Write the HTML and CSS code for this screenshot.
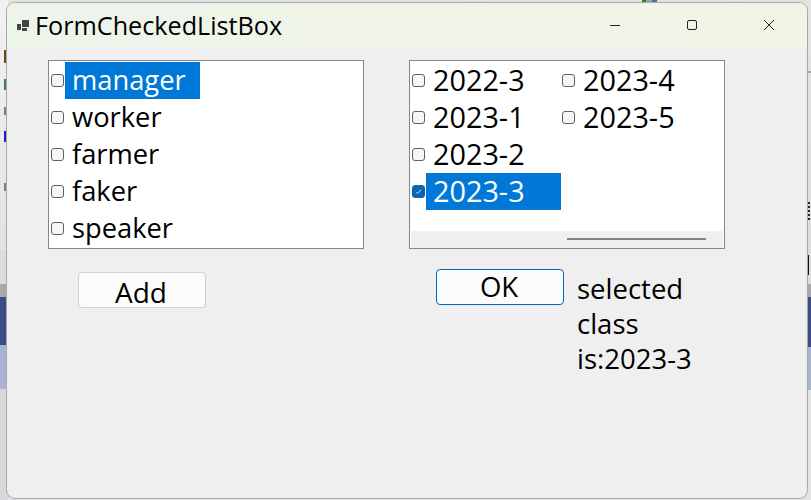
FILE: index.html
```html
<!DOCTYPE html>
<html lang="en">
<head>
<meta charset="utf-8">
<title>FormCheckedListBox</title>
<link rel="stylesheet" href="styles.css">
</head>
<body>
<div class="desktop">
  <div class="strip strip-left">
    <i class="mark mark-a"></i>
    <i class="mark mark-b"></i>
    <i class="mark mark-c"></i>
    <i class="mark mark-d"></i>
    <i class="mark mark-e"></i>
  </div>
  <div class="strip strip-right">
    <i class="mark mark-f"></i>
    <i class="mark mark-g"></i>
    <i class="mark mark-h"></i>
  </div>
  <div class="topbits"><i class="bit bit-g"></i><i class="bit bit-s"></i><i class="bit bit-b"></i></div>
  <div class="window">
    <header class="titlebar">
      <svg class="app-icon" width="13" height="11" viewBox="0 0 13 11"><path fill="#444" d="M0 4h4v6H0zM5 0h7v7H5zM5 8h5v3H5z"/></svg>
      <span class="title">FormCheckedListBox</span>
      <div class="caption">
        <svg class="cap" width="46" height="12" viewBox="0 0 46 12"><path stroke="#222" stroke-width="1" d="M18 6.5h10"/></svg>
        <svg class="cap" width="46" height="12" viewBox="0 0 46 12"><rect x="18.5" y="1.5" width="9" height="9" rx="1.5" fill="none" stroke="#222"/></svg>
        <svg class="cap" width="46" height="12" viewBox="0 0 46 12"><path stroke="#222" fill="none" d="M18 1l10 10M28 1L18 11"/></svg>
      </div>
    </header>
    <main class="content">
      <section class="col col-left">
        <div class="listbox">
          <div class="item"><span class="box"></span><span class="label selected">manager</span></div>
          <div class="item"><span class="box"></span><span class="label">worker</span></div>
          <div class="item"><span class="box"></span><span class="label">farmer</span></div>
          <div class="item"><span class="box"></span><span class="label">faker</span></div>
          <div class="item"><span class="box"></span><span class="label">speaker</span></div>
        </div>
        <button class="btn btn-add">Add</button>
      </section>
      <section class="col col-right">
        <div class="listbox listbox-multi">
          <div class="columns">
            <div class="item"><span class="box"></span><span class="label num">2022-3</span></div>
            <div class="item"><span class="box"></span><span class="label num">2023-4</span></div>
            <div class="item"><span class="box"></span><span class="label num">2023-1</span></div>
            <div class="item"><span class="box"></span><span class="label num">2023-5</span></div>
            <div class="item"><span class="box"></span><span class="label num">2023-2</span></div>
            <div class="item"></div>
            <div class="item"><span class="box checked"><svg width="9" height="9" viewBox="0 0 9 9"><path d="M2 4.8l1.7 1.7L7 2.8" fill="none" stroke="#cfe2f5" stroke-width="1"/></svg></span><span class="label num selected">2023-3</span></div>
          </div>
          <div class="hscroll"><div class="thumb"></div></div>
        </div>
        <div class="action-row">
          <button class="btn btn-ok">OK</button>
          <p class="result">selected class is:2023-3</p>
        </div>
      </section>
    </main>
  </div>
</div>
</body>
</html>
```
FILE: styles.css
```css
* { box-sizing: border-box; }
html, body { margin: 0; height: 100%; }
body { overflow: hidden; font-family: "Open Sans", "Noto Sans", sans-serif; color: #000; }
.desktop { position: relative; width: 811px; height: 500px; background: #e2e2e4; overflow: hidden; }
.strip { position: absolute; top: 0; height: 500px; overflow: hidden; }
.strip-left { left: 0; width: 8px; background: linear-gradient(#f2f2f2 0, #e2e2e2 250px, #dcdcde 250px, #dcdcde 284px, #a9a9ad 284px, #a9a9ad 297px, #3b4d85 297px, #3b4d85 345px, #a9b4d2 345px, #a9b4d2 389px, #d8d8dc 389px); }
.strip-right { right: 0; width: 5px; background: linear-gradient(#e4e4e6 0, #dcdcde 284px, #a9a9ad 284px, #a9a9ad 297px, #3b4d85 297px, #3b4d85 347px, #a9b4d2 347px, #a9b4d2 390px, #e4e4e4 390px); }
.mark { position: absolute; display: block; }
.mark-a { left: 4px; top: 50px; width: 2px; height: 13px; background: #6b4a20; }
.mark-b { left: 4px; top: 79px; width: 2px; height: 11px; background: #3d7a7a; }
.mark-c { left: 4px; top: 107px; width: 3px; height: 8px; background: #7a7a90; }
.mark-d { left: 4px; top: 131px; width: 2px; height: 11px; background: #1a1ae0; }
.mark-e { left: 4px; top: 183px; width: 3px; height: 8px; background: #7a7a90; }
.mark-f { left: 0; top: 202px; width: 4px; height: 18px; background: repeating-linear-gradient(#222 0, #222 2px, #dcdcde 2px, #dcdcde 4px); }
.mark-g { left: 0; top: 255px; width: 3px; height: 20px; background: #111; }
.mark-h { left: 0; top: 71px; width: 5px; height: 2px; background: #a8a8b0; }
.topbits { position: absolute; left: 642px; top: 0; display: flex; height: 3px; }
.bit { display: block; height: 3px; }
.bit-g { width: 4px; background: #1d8a2f; }
.bit-s { width: 6px; background: #a0a0a8; }
.bit-b { width: 5px; background: #5a6aa8; }
.window { position: absolute; left: 7px; top: 3px; width: 800px; height: 495px; background: #efefef; border-radius: 8px; box-shadow: 0 0 0 1px #a8a8a8; overflow: hidden; }
.titlebar { display: flex; align-items: center; height: 45px; padding-left: 10px; background: linear-gradient(90deg, #edf4ea, #f3f3e5); }
.app-icon { flex: none; margin-right: 6px; margin-top: -1px; }
.title { font-size: 25.2px; line-height: 45px; white-space: nowrap; margin-left: -1px; }
.caption { display: flex; margin-left: auto; padding-right: 15px; gap: 31px; }
.cap { display: block; margin-top: -1px; }
.content { display: grid; grid-template-columns: 316px 316px; column-gap: 45px; padding: 12px 0 0 41px; }
.listbox { height: 189px; padding: 1px; background: #fff; border: 1px solid #828790; overflow: hidden; position: relative; }
.item { display: flex; align-items: center; height: 37px; }
.box { flex: none; display: flex; align-items: center; justify-content: center; width: 13px; height: 13px; margin-left: 1px; background: #f6f6f6; border: 1px solid #5f5f5f; border-radius: 3px; }
.box.checked { background: #0a64b8; border-color: #0a64b8; }
.label { display: block; width: 135px; height: 37px; margin-left: 1px; padding-left: 7px; font-size: 27.3px; line-height: 36px; white-space: nowrap; }
.num { font-size: 28.8px; }
.selected { background: #0078d7; color: #fff; }
.columns { display: grid; grid-template-columns: 150px 150px; }
.hscroll { position: absolute; left: 1px; right: 1px; bottom: 0; height: 17px; background: #f0f0f0; }
.thumb { position: absolute; left: 156px; top: 7px; width: 139px; height: 2px; background: #858585; }
.col-left .btn-add { margin: 23px 0 0 30px; }
.btn { display: block; width: 128px; height: 36px; padding: 0 2px 0 0; background: #fcfcfc; border: 1px solid #d0d0d0; border-radius: 4px; font: inherit; font-size: 28px; line-height: 38px; color: #000; }
.action-row { display: flex; align-items: flex-start; margin: 20px 0 0 27px; }
.btn-ok { flex: none; border-color: #0067c0; font-size: 27.5px; line-height: 34px; }
.result { width: 130px; margin: 2px 0 0 13px; font-size: 27.5px; line-height: 35px; }
```
